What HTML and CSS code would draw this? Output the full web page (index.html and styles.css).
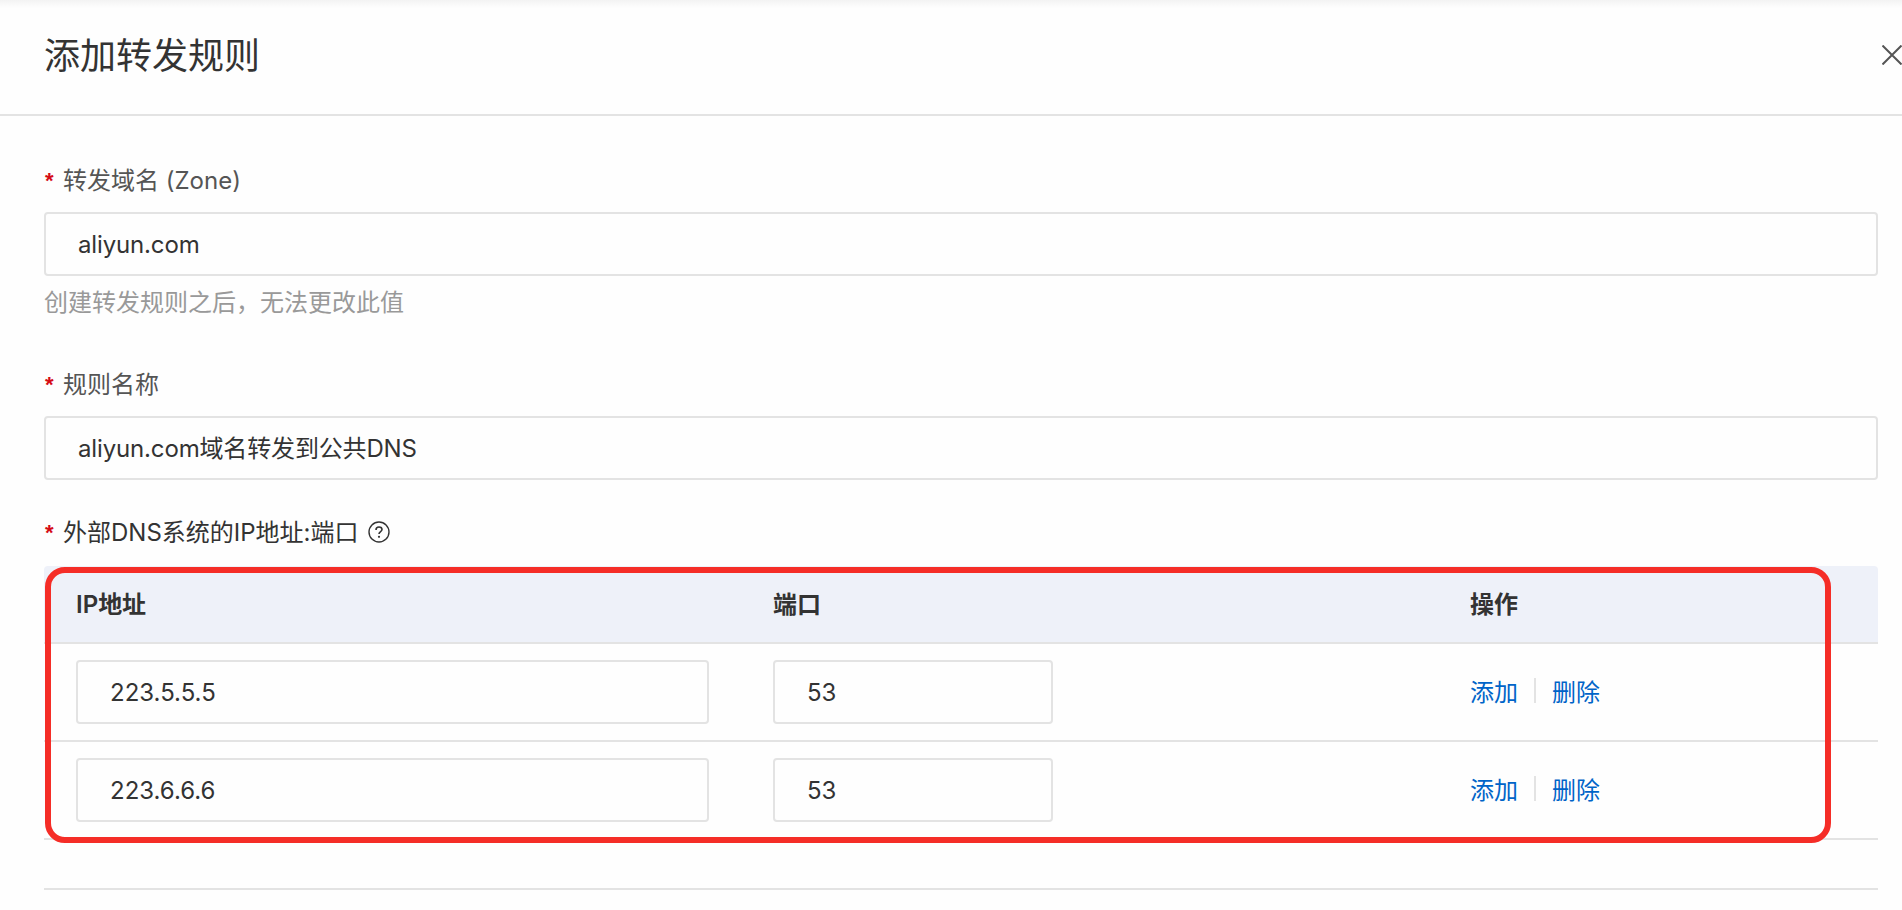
FILE: index.html
```html
<!DOCTYPE html>
<html lang="zh-CN">

<head>
    <meta charset="UTF-8">
    <meta name="viewport" content="width=device-width, initial-scale=1.0">
    <title>添加转发规则</title>
    <link rel="stylesheet" href="styles.css">
</head>

<body>
    <div class="drawer">
        <div class="drawer-header">
            <h1>添加转发规则</h1>
            <button class="close-btn" aria-label="关闭">
                <svg width="20" height="20" viewBox="0 0 20 20">
                    <path d="M0.5 0.5L19.5 19.5M19.5 0.5L0.5 19.5" stroke="#555" stroke-width="2" fill="none" />
                </svg>
            </button>
        </div>

        <form class="drawer-body">
            <div class="form-group">
                <label for="zone"><span class="required">*</span>转发域名 (Zone)</label>
                <input type="text" id="zone" class="text" value="aliyun.com">
                <p class="help">创建转发规则之后，无法更改此值</p>
            </div>

            <div class="form-group">
                <label for="ruleName"><span class="required">*</span>规则名称</label>
                <input type="text" id="ruleName" class="text mixed" value="aliyun.com域名转发到公共DNS">
            </div>

            <div class="form-group">
                <div class="label dark">
                    <span class="required">*</span>外部DNS系统的IP地址:端口
                    <svg class="help-icon" width="22" height="22" viewBox="0 0 22 22" fill="none" stroke="#333">
                        <circle cx="11" cy="11" r="10" stroke-width="1.4" />
                        <path d="M8 8.9C8 7 9.3 6 11 6s3 1 3 2.6c0 2-3 2.1-3 4.4" stroke-width="1.6" />
                        <circle cx="11" cy="15.8" r="1.1" fill="#333" stroke="none" />
                    </svg>
                </div>

                <div class="table-wrap">
                    <table>
                        <thead>
                            <tr>
                                <th class="col-ip">IP地址</th>
                                <th class="col-port">端口</th>
                                <th>操作</th>
                            </tr>
                        </thead>
                        <tbody>
                            <tr>
                                <td><input type="text" value="223.5.5.5"></td>
                                <td><input type="text" class="port" value="53"></td>
                                <td>
                                    <div class="actions"><a href="#">添加</a><span class="divider"></span><a href="#">删除</a></div>
                                </td>
                            </tr>
                            <tr>
                                <td><input type="text" value="223.6.6.6"></td>
                                <td><input type="text" class="port" value="53"></td>
                                <td>
                                    <div class="actions"><a href="#">添加</a><span class="divider"></span><a href="#">删除</a></div>
                                </td>
                            </tr>
                        </tbody>
                    </table>
                    <div class="highlight"></div>
                </div>
            </div>

            <hr>
        </form>
    </div>
</body>

</html>
```
FILE: styles.css
```css
* {
    box-sizing: border-box;
}

body {
    margin: 0;
    font-family: Inter, "Noto Sans CJK SC", sans-serif;
    font-size: 24px;
    line-height: 36px;
    color: #333;
    background-color: #fefefe;
    overflow: hidden;
}

.drawer {
    height: 910px;
    background: linear-gradient(#f3f3f3, #fefefe 8px);
}

.drawer-header {
    display: flex;
    justify-content: space-between;
    height: 116px;
    padding: 29px 0 0 44px;
    border-bottom: 2px solid #e3e3e3;
}

h1 {
    margin: 0;
    font-size: 36px;
    font-weight: normal;
    line-height: 54px;
}

.close-btn {
    width: 20px;
    height: 20px;
    margin-top: 16px;
    padding: 0;
    border: none;
    background: none;
    cursor: pointer;
}

.close-btn svg {
    display: block;
}

.drawer-body {
    padding: 47px 24px 0 44px;
}

label,
.label {
    display: flex;
    align-items: center;
    height: 36px;
    margin-bottom: 13px;
    color: #555;
}

.label.dark {
    color: #333;
    margin-bottom: 15px;
}

.required {
    width: 19px;
    padding-left: 1px;
    color: #d50b16;
    font-family: "Liberation Sans", sans-serif;
    font-size: 22px;
    font-weight: bold;
}

.help-icon {
    margin: -2px 0 0 9px;
}

input {
    display: block;
    width: 100%;
    height: 64px;
    padding: 0 32px;
    border: 2px solid #e3e3e3;
    border-radius: 4px;
    background-color: transparent;
    color: #333;
    font: inherit;
}

.text {
    letter-spacing: -0.15px;
}

.mixed {
    padding-bottom: 3px;
}

.port {
    width: 280px;
}

.help {
    margin: 9px 0 0;
    color: #999;
}

.form-group {
    margin-bottom: 35px;
}

.form-group:first-child {
    margin-bottom: 46px;
}

.table-wrap {
    position: relative;
}

table {
    width: 100%;
    table-layout: fixed;
    border-collapse: separate;
    border-spacing: 0;
}

.col-ip,
.col-port {
    width: 697px;
}

th {
    height: 78px;
    padding: 1px 32px 0;
    border-bottom: 2px solid #e3e3e3;
    background-color: #eef1f9;
    text-align: left;
    font-weight: 600;
}

th:first-child {
    border-top-left-radius: 4px;
}

th:last-child {
    border-top-right-radius: 4px;
}

td {
    height: 98px;
    padding: 0 32px;
    border-bottom: 2px solid #e3e3e3;
}

.actions {
    display: flex;
    align-items: center;
}

.actions a {
    padding-top: 1px;
    color: #0064c8;
    text-decoration: none;
}

.divider {
    width: 2px;
    height: 25px;
    margin: -3px 16px 0;
    background-color: #e3e3e3;
}

/* red frame drawn over the table */
.highlight {
    position: absolute;
    top: 1px;
    left: 1px;
    width: 1786px;
    height: 276px;
    border: 6px solid #f52d27;
    border-radius: 20px;
    pointer-events: none;
}

hr {
    height: 2px;
    margin: 48px 0 0;
    border: none;
    background-color: #e3e3e3;
}
```
